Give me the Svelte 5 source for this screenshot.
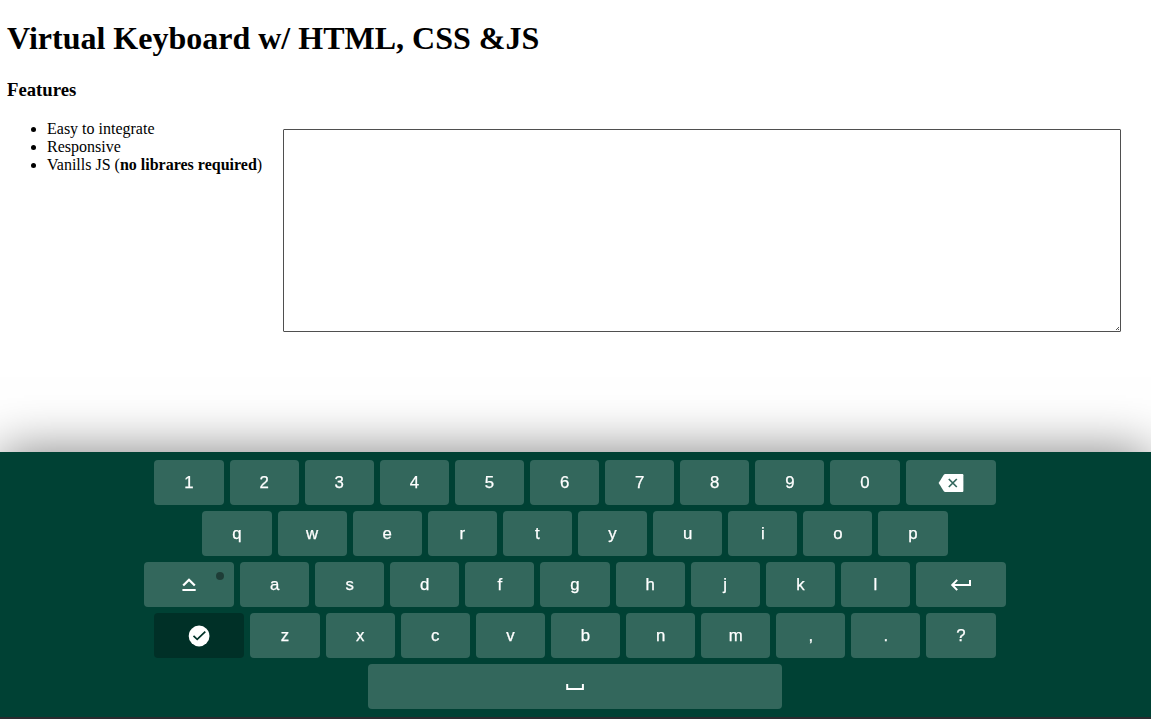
<script>
  const letters = (s) => s.split('').map((label) => ({ label }));
  const rows = [
    [...letters('1234567890'), { icon: 'backspace', wide: true }],
    letters('qwertyuiop'),
    [{ icon: 'caps', wide: true, lock: true }, ...letters('asdfghjkl'), { icon: 'enter', wide: true }],
    [{ icon: 'done', wide: true, dark: true }, ...letters('zxcvbnm,.?')],
    [{ icon: 'space', extraWide: true }]
  ];
</script>

<main>
  <h1>Virtual Keyboard w/ HTML, CSS &amp;JS</h1>
  <h3>Features</h3>
  <div class="content">
    <ul>
      <li>Easy to integrate</li>
      <li>Responsive</li>
      <li>Vanills JS (<strong>no librares required</strong>)</li>
    </ul>
    <div class="field">
      <textarea aria-label="Text"></textarea>
      <svg class="grip" viewBox="0 0 3 3" shape-rendering="crispEdges">
        <path d="M2 0h1v1H2zM1 1h1v1H1zM0 2h1v1H0zM2 2h1v1H2z" />
      </svg>
    </div>
  </div>
</main>

<div class="keyboard">
  {#each rows as row}
    <div class="row">
      {#each row as key}
        <button class="key" class:wide={key.wide} class:extra-wide={key.extraWide} class:dark={key.dark} class:lock={key.lock}>
          {#if key.icon}
            <svg class="icon" viewBox="0 0 26 27">
              {#if key.icon === 'backspace'}
                <path class="solid" d="M7.2 5h16.9c.8 0 1.3.5 1.3 1.3v15.4c0 .8-.5 1.3-1.3 1.3H7.2c-.6 0-1-.3-1.4-.8L.6 14l5.2-8.2c.4-.5.8-.8 1.4-.8z" />
                <path class="cut" d="M10.8 10l8 8M18.8 10l-8 8" />
              {:else if key.icon === 'caps'}
                <path class="line thick" d="M7.2 14.5L13 8.8l5.8 5.7" />
                <path class="solid" d="M6.4 18h13.3v2H6.4z" />
              {:else if key.icon === 'enter'}
                <path class="line" d="M9.2 8.9L4.2 14l5 5.1M4.2 14H22V9" />
              {:else if key.icon === 'done'}
                <circle class="solid" cx="13.1" cy="14" r="10.4" />
                <path class="cut done" d="M7.5 13.9l3.7 3.5 8.1-7.8" />
              {:else}
                <path class="line" d="M5.2 11v5h15.7v-5" />
              {/if}
            </svg>
          {:else}{key.label}{/if}
        </button>
      {/each}
    </div>
  {/each}
</div>
<div class="edge"></div>

<style>
  :global(body) {
    overflow: hidden;
    background: #fff;
  }
  main {
    padding: 0 7px;
    font: 16px "Liberation Serif", "Times New Roman", serif;
    color: #000;
  }
  h1 {
    margin: 0;
    padding-top: 20px;
    font-size: 32px;
    line-height: 37px;
  }
  h3 {
    margin: 22px 0 0;
    font-size: 18.72px;
    line-height: 22px;
  }
  .content {
    display: flex;
    gap: 21px;
    padding-top: 19px;
  }
  ul {
    width: 215px;
    margin: 0;
    padding-left: 40px;
    line-height: 18px;
    white-space: nowrap;
  }
  .field {
    position: relative;
    width: 838px;
    height: 203px;
    margin-top: 9px;
  }
  textarea {
    display: block;
    box-sizing: border-box;
    width: 100%;
    height: 100%;
    margin: 0;
    border: 1px solid #4f4f4f;
    border-radius: 1px;
    background: #fff;
    resize: none;
  }
  .grip {
    position: absolute;
    right: 2px;
    bottom: 2px;
    width: 3px;
    height: 3px;
    fill: #555;
  }
  .keyboard {
    position: fixed;
    left: -1px;
    bottom: 2px;
    width: 1152px;
    box-sizing: border-box;
    padding: 5px 0;
    background: #004134;
    box-shadow: 0 0 50px rgba(0, 0, 0, 0.5);
  }
  .edge {
    position: fixed;
    left: 0;
    right: 0;
    bottom: 0;
    height: 2px;
    background: #2b2b2f;
  }
  .row {
    display: flex;
    justify-content: center;
  }
  .key {
    position: relative;
    display: flex;
    align-items: center;
    justify-content: center;
    flex: none;
    box-sizing: border-box;
    width: 6%;
    height: 45px;
    margin: 3px;
    padding: 0;
    border: 0;
    border-radius: 4px;
    background: rgba(255, 255, 255, 0.2);
    color: #fff;
    font: 16.8px "Liberation Sans", Arial, sans-serif;
    -webkit-text-stroke: 0.25px #fff;
  }
  .wide {
    width: 90px;
  }
  .extra-wide {
    width: 36%;
  }
  .dark {
    background: rgba(0, 0, 0, 0.25);
  }
  .lock::after {
    content: '';
    position: absolute;
    top: 10px;
    right: 10px;
    width: 8px;
    height: 8px;
    border-radius: 50%;
    background: rgba(0, 0, 0, 0.4);
  }
  .icon {
    width: 26px;
    height: 27px;
  }
  .solid {
    fill: #fff;
  }
  .line {
    fill: none;
    stroke: #fff;
    stroke-width: 2;
  }
  .thick {
    stroke-width: 2.3;
  }
  .cut {
    fill: none;
    stroke: #33675d;
    stroke-width: 1.7;
  }
  .cut.done {
    stroke: #003127;
  }
</style>
